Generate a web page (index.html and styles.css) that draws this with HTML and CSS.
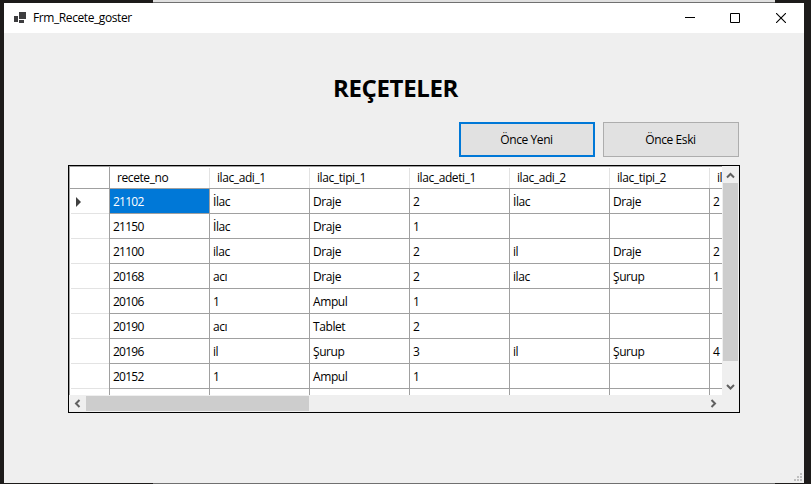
FILE: index.html
```html
<!DOCTYPE html>
<html lang="tr">
<head>
<meta charset="utf-8">
<title>Frm_Recete_goster</title>
<link rel="stylesheet" href="styles.css">
</head>
<body>
<div class="edge edge-top"></div>
<div class="window">
  <header class="titlebar">
    <svg class="app-icon" width="12" height="11" viewBox="0 0 12 11" fill="#3d3d3f"><path d="M5 0h7v7H5zM0 4h4v6H0zM5 8h5v3H5z"/></svg>
    <span class="caption">Frm_Recete_goster</span>
    <div class="controls">
      <svg width="10" height="10" viewBox="0 0 10 10"><path d="M0 4.5h10" stroke="#000"/></svg>
      <svg width="10" height="10" viewBox="0 0 10 10"><path d="M.5.5h9v9h-9z" fill="none" stroke="#000"/></svg>
      <svg width="10" height="10" viewBox="0 0 10 10"><path d="M0 0l10 10M10 0L0 10" stroke="#000" stroke-width="1.1"/></svg>
    </div>
  </header>
  <main class="client">
    <h1>REÇETELER</h1>
    <div class="buttons">
      <button class="btn focused">Önce Yeni</button>
      <button class="btn">Önce Eski</button>
    </div>
    <div class="grid">
      <div class="view">
        <div class="row head"><b></b><span>recete_no</span><span>ilac_adi_1</span><span>ilac_tipi_1</span><span>ilac_adeti_1</span><span>ilac_adi_2</span><span>ilac_tipi_2</span><span>ilac_adeti_2</span></div>
        <div class="row"><b><svg width="5" height="10" viewBox="0 0 5 10"><path d="M0 0l5 5-5 5z" fill="#404040"/></svg></b><span class="num selected">21102</span><span>İlac</span><span>Draje</span><span>2</span><span>İlac</span><span>Draje</span><span>2</span></div>
        <div class="row"><b></b><span class="num">21150</span><span>İlac</span><span>Draje</span><span>1</span><span></span><span></span><span></span></div>
        <div class="row"><b></b><span class="num">21100</span><span>ilac</span><span>Draje</span><span>2</span><span>il</span><span>Draje</span><span>2</span></div>
        <div class="row"><b></b><span class="num">20168</span><span>acı</span><span>Draje</span><span>2</span><span>ilac</span><span>Şurup</span><span>1</span></div>
        <div class="row"><b></b><span class="num">20106</span><span>1</span><span>Ampul</span><span>1</span><span></span><span></span><span></span></div>
        <div class="row"><b></b><span class="num">20190</span><span>acı</span><span>Tablet</span><span>2</span><span></span><span></span><span></span></div>
        <div class="row"><b></b><span class="num">20196</span><span>il</span><span>Şurup</span><span>3</span><span>il</span><span>Şurup</span><span>4</span></div>
        <div class="row"><b></b><span class="num">20152</span><span>1</span><span>Ampul</span><span>1</span><span></span><span></span><span></span></div>
        <div class="row"><b></b><span></span><span></span><span></span><span></span><span></span><span></span><span></span></div>
      </div>
      <div class="vscroll">
        <svg width="15" height="16" viewBox="0 0 15 16"><path d="M4 10.5l3.5-3.5 3.5 3.5" fill="none" stroke="#606060" stroke-width="2"/></svg>
        <i></i>
        <svg class="down" width="15" height="16" viewBox="0 0 15 16"><path d="M4 6l3.5 3.5L11 6" fill="none" stroke="#606060" stroke-width="2"/></svg>
      </div>
      <div class="hscroll">
        <svg width="16" height="15" viewBox="0 0 16 15"><path d="M9.5 4L6 7.5 9.5 11" fill="none" stroke="#606060" stroke-width="2"/></svg>
        <i></i>
        <svg class="right" width="16" height="15" viewBox="0 0 16 15"><path d="M5.5 4L9 7.5 5.5 11" fill="none" stroke="#606060" stroke-width="2"/></svg>
      </div>
    </div>
    <svg class="grip" width="8" height="8" viewBox="0 0 8 8" fill="#bfbfbf"><path d="M6 0h2v2H6zM3 3h2v2H3zM6 3h2v2H6zM0 6h2v2H0zM3 6h2v2H3zM6 6h2v2H6z"/></svg>
  </main>
</div>
<div class="edge edge-bottom"></div>
</body>
</html>
```
FILE: styles.css
```css
* { box-sizing: border-box; }
body {
  margin: 0;
  width: 811px;
  height: 484px;
  overflow: hidden;
  background: #1d1b1a;
  color: #000;
  font: 12px/16px "Open Sans", "Noto Sans", sans-serif;
  letter-spacing: -0.41px;
}
svg { display: block; flex: none; }
.edge { margin-left: 153px; width: 622px; background: #707070; }
.edge-top { height: 3px; background: #e0e0e0; border-bottom: 1px solid #707070; }
.edge-bottom { height: 1px; }
.window { margin-left: 4px; width: 800px; height: 480px; }
.titlebar { display: flex; align-items: center; height: 30px; background: #fff; padding-left: 10px; }
.app-icon { margin-top: -1px; }
.caption { margin-left: 7px; }
.controls { display: flex; gap: 36px; margin: -1px 18px 0 auto; }
.controls svg:nth-child(2) { margin-left: -1px; }
.client { position: relative; height: 450px; background: #efefef; padding: 39px 64px 0; }
h1 {
  margin: 0 0 0 265px;
  font-size: 24px;
  line-height: 32px;
  font-weight: 700;
  letter-spacing: -0.35px;
}
.buttons { display: flex; gap: 8px; justify-content: flex-end; margin: 18px 1px 8px 0; }
.btn {
  width: 136px;
  height: 35px;
  padding: 0 1px 0 0;
  font: inherit;
  letter-spacing: inherit;
  color: #000;
  background: #e1e1e1;
  border: 1px solid #adadad;
}
.focused { border: 2px solid #0078d7; }
.grid {
  display: grid;
  grid-template: 229px 17px / 654px 16px;
  width: 672px;
  height: 248px;
  border: 1px solid #000;
}
.view {
  width: 653px;
  overflow: hidden;
  background: #fff;
  border: solid #a0a0a0;
  border-width: 1px 0 0 1px;
}
.row { display: flex; height: 25px; width: 740px; }
.row b { width: 40px; flex: none; padding: 8px 0 0 6px; border-right: 1px solid #a0a0a0; background: linear-gradient(#e3e3e3, #e3e3e3) 1px 100% / 100% 1px no-repeat; }
.row span { width: 100px; flex: none; padding: 5px 0 0 3px; border: solid #a0a0a0; border-width: 0 1px 1px 0; white-space: nowrap; }
.row .num { letter-spacing: -0.75px; }
.row .selected { background: #0078d7; color: #fff; }
.head { height: 22px; border-bottom: 1px solid #a0a0a0; }
.head b { background: none; }
.row.head span { padding: 3px 0 0 7px; border: 0; background: linear-gradient(#e3e3e3, #e3e3e3) 100% 1px / 1px 100% no-repeat; }
.vscroll { display: flex; flex-direction: column; width: 15px; height: 229px; padding-top: 1px; }
.vscroll i { height: 178px; background: #cdcdcd; }
.down { margin-top: auto; }
.hscroll { display: flex; grid-column: 1 / 3; width: 652px; height: 15px; margin: 1px 0 0 1px; }
.hscroll i { width: 223px; background: #cdcdcd; }
.right { margin-left: auto; }
.grip { position: absolute; right: 2px; bottom: 2px; }
```
